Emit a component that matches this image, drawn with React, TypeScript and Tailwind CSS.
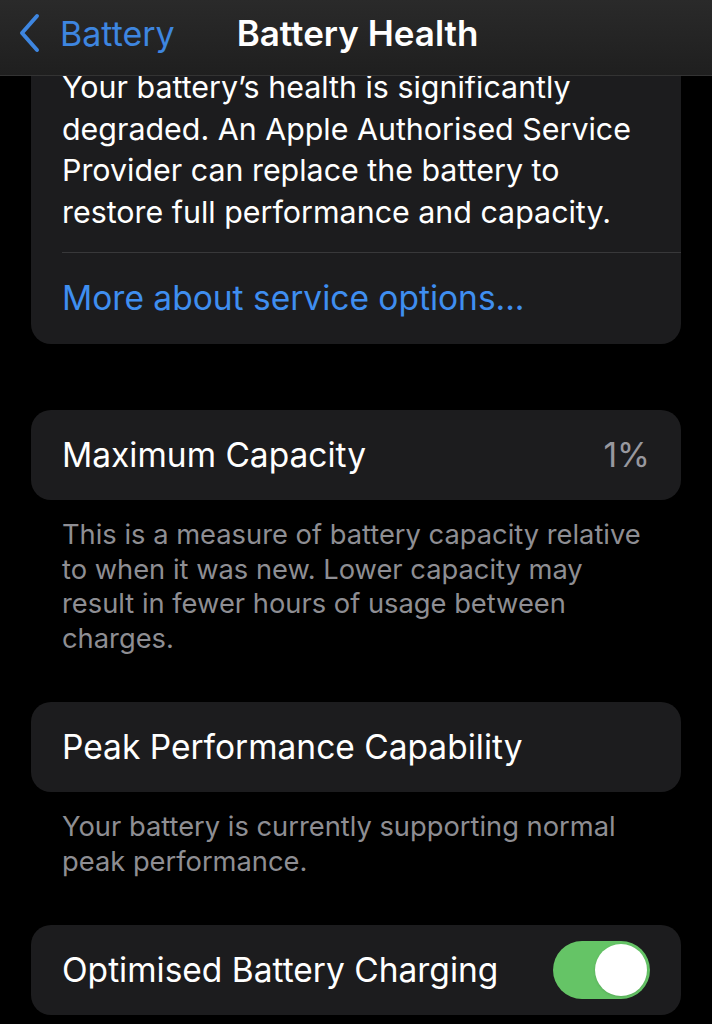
import React from "react"

const font = { fontFamily: "Inter, 'Noto Sans', sans-serif" }

function Card({ children }: { children: React.ReactNode }) {
  return (
    <div className="mx-[31px] rounded-[20px] bg-[#1c1c1e] px-[31px]">{children}</div>
  )
}

function Row({ label, right }: { label: string; right?: React.ReactNode }) {
  return (
    <Card>
      <div className="flex h-[90px] items-center justify-between text-[33.5px] text-white">
        <span>{label}</span>
        {right}
      </div>
    </Card>
  )
}

function Footer({ children }: { children: React.ReactNode }) {
  return (
    <p className="px-[62px] pt-[18px] text-[27.3px] leading-[34.5px] text-[#8e8e93]">
      {children}
    </p>
  )
}

function Toggle() {
  return (
    <div className="flex h-[58px] w-[97px] items-center justify-end rounded-full bg-[#65c466] p-[3px]">
      <div className="size-[52px] rounded-full bg-white shadow" />
    </div>
  )
}

export default function App() {
  return (
    <div className="relative h-[1024px] w-[712px] overflow-hidden bg-black" style={font}>
      {/* nav bar sits over the scrolled content */}
      <div className="absolute inset-x-0 top-0 z-10 flex h-[76px] items-center border-b border-[#333] bg-gradient-to-b from-[#2a2a2a] to-[#1f1f1f] pb-[9px]">
        <svg className="ml-[17px] h-[40px] w-[24px]" viewBox="0 0 24 40" fill="none">
          <path d="M20 3 L5 20 L20 37" stroke="#3e86e0" strokeWidth="4" strokeLinecap="round" strokeLinejoin="round" />
        </svg>
        <span className="ml-[19px] text-[34px] text-[#3e86e0]">Battery</span>
        <span className="ml-[62px] text-[35px] font-semibold text-white">Battery Health</span>
      </div>

      <div className="flex flex-col">
        <Card>
          <p className="pt-[67px] text-[30.4px] leading-[41.5px] text-white">
            Your battery’s health is significantly degraded. An Apple Authorised Service
            Provider can replace the battery to restore full performance and capacity.
          </p>
          <div className="-mr-[31px] mt-[19px] h-px bg-[#38383a]" />
          <div className="flex h-[91px] items-center text-[33.5px] text-[#3f8ef0]">
            More about service options...
          </div>
        </Card>

        <div className="h-[66px]" />
        <Row label="Maximum Capacity" right={<span className="text-[#98989f]">1%</span>} />
        <Footer>
          This is a measure of battery capacity relative to when it was new. Lower capacity may
          result in fewer hours of usage between charges.
        </Footer>

        <div className="h-[46px]" />
        <Row label="Peak Performance Capability" />
        <Footer>Your battery is currently supporting normal peak performance.</Footer>

        <div className="h-[46px]" />
        <Row label="Optimised Battery Charging" right={<Toggle />} />
      </div>
    </div>
  )
}
